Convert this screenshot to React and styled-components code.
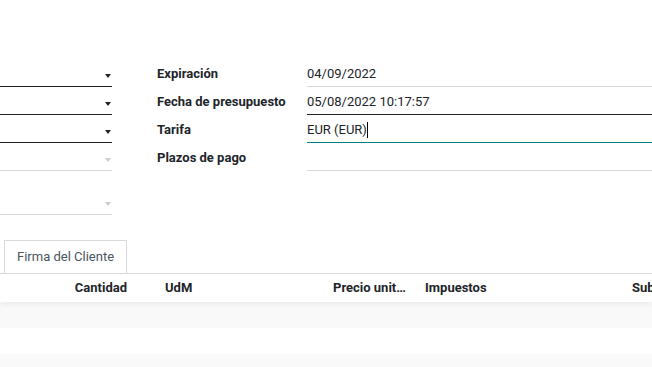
import { Fragment } from 'react';
import styled, { createGlobalStyle } from 'styled-components';

const GlobalStyle = createGlobalStyle`
  html, body {
    margin: 0;
    padding: 0;
    background: #fff;
    overflow: hidden;
  }
  body {
    font-family: Roboto, 'Liberation Sans', sans-serif;
    font-size: 13px;
    color: #212529;
  }
`;

const Sheet = styled.div`
  width: 652px;
  height: 367px;
  overflow: hidden;
  padding-top: 59px;
  box-sizing: border-box;
`;

const Groups = styled.div`
  display: flex;
  align-items: flex-start;
`;

const LeftGroup = styled.div`
  width: 112px;
  margin-right: 45px;
  flex-shrink: 0;
`;

const SelectField = styled.div`
  height: ${(p) => (p.$tall ? 44 : 28)}px;
  border-bottom: 1px solid ${(p) => (p.$muted ? '#d6d8db' : '#1f2327')};
  display: flex;
  justify-content: flex-end;
  align-items: flex-end;
  padding: 0 1px 8px 0;
  box-sizing: border-box;
`;

const Arrow = styled.span`
  width: 0;
  height: 0;
  border-left: 3.5px solid transparent;
  border-right: 3.5px solid transparent;
  border-top: 4px solid ${(p) => (p.$muted ? '#c9cccf' : '#1f2327')};
`;

const RightGroup = styled.div`
  flex: 1;
  display: grid;
  grid-template-columns: 150px 1fr;
  grid-auto-rows: 28px;
`;

const Label = styled.div`
  font-weight: 700;
  line-height: 25px;
  padding-top: 2px;
  white-space: nowrap;
`;

const Value = styled.div`
  height: 28px;
  line-height: 25px;
  padding-top: 2px;
  box-sizing: border-box;
  border-bottom: 1px solid ${(p) => p.$line};
  white-space: nowrap;
  overflow: hidden;
`;

const Caret = styled.span`
  display: inline-block;
  width: 1px;
  height: 16px;
  background: #000;
  vertical-align: -4px;
`;

const TabNav = styled.div`
  margin-top: 25px;
  display: flex;
  border-bottom: 1px solid #d8dadd;
`;

const Tab = styled.div`
  margin-left: 4px;
  padding: 0 12px;
  height: 32px;
  line-height: 32px;
  border: 1px solid #d8dadd;
  border-bottom: 0;
  color: #4a5561;
  white-space: nowrap;
`;

const HeadRow = styled.div`
  display: flex;
  height: 28px;
  line-height: 28px;
  font-weight: 700;
  background: #fff;
  position: relative;
  z-index: 1;
  box-shadow: 0 3px 6px rgba(0, 0, 0, 0.05);
`;

const HeadCell = styled.div`
  flex-shrink: 0;
  width: ${(p) => p.$w}px;
  padding: ${(p) => p.$pad || '0 8px'};
  text-align: ${(p) => p.$align || 'left'};
  box-sizing: border-box;
  white-space: nowrap;
  overflow: hidden;
  text-overflow: ${(p) => (p.$clip ? 'clip' : 'ellipsis')};
`;

const BodyRow = styled.div`
  height: 26px;
  background: ${(p) => (p.$odd ? '#f9f9f9' : '#fff')};
`;

const leftFields = [
  { muted: false },
  { muted: false },
  { muted: false },
  { muted: true },
  { muted: true, tall: true },
];

const rightFields = [
  { label: 'Expiración', value: '04/09/2022', line: '#d6d8db' },
  { label: 'Fecha de presupuesto', value: '05/08/2022 10:17:57', line: '#1f2327' },
  { label: 'Tarifa', value: 'EUR (EUR)', line: '#017e84', focused: true },
  { label: 'Plazos de pago', value: '', line: '#d6d8db' },
];

const columns = [
  { title: 'Cantidad', w: 135, align: 'right' },
  { title: 'UdM', w: 190, pad: '0 8px 0 30px' },
  { title: 'Precio unitario', w: 92 },
  { title: 'Impuestos', w: 207 },
  { title: 'Subtotal', w: 120, clip: true },
];

function App() {
  return (
    <>
      <GlobalStyle />
      <Sheet>
        <Groups>
          <LeftGroup>
            {leftFields.map((f, i) => (
              <SelectField key={i} $muted={f.muted} $tall={f.tall}>
                <Arrow $muted={f.muted} />
              </SelectField>
            ))}
          </LeftGroup>
          <RightGroup>
            {rightFields.map((f) => (
              <Fragment key={f.label}>
                <Label>{f.label}</Label>
                <Value $line={f.line}>
                  {f.value}
                  {f.focused && <Caret />}
                </Value>
              </Fragment>
            ))}
          </RightGroup>
        </Groups>

        <TabNav>
          <Tab>Firma del Cliente</Tab>
        </TabNav>

        <HeadRow>
          {columns.map((c) => (
            <HeadCell key={c.title} $w={c.w} $align={c.align} $pad={c.pad} $clip={c.clip}>
              {c.title}
            </HeadCell>
          ))}
        </HeadRow>
        <BodyRow $odd />
        <BodyRow />
        <BodyRow $odd />
      </Sheet>
    </>
  );
}

export default App;
